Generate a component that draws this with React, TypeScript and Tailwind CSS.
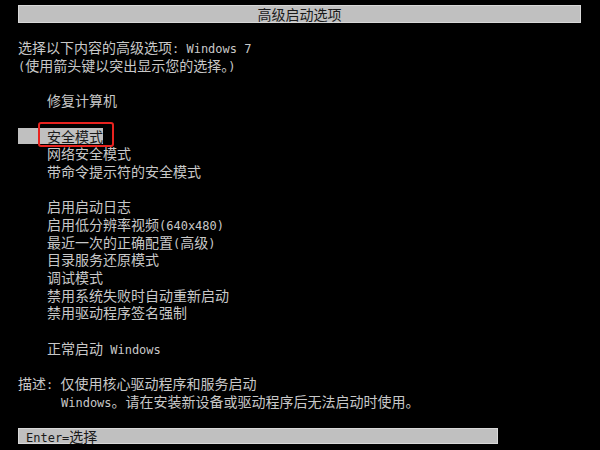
import React from "react";

const CJK = { fontFamily: '"Noto Sans CJK SC", "Noto Sans", sans-serif' };

function L({ children }: { children: React.ReactNode }) {
  return (
    <span className="text-[12px] [font-family:'DejaVu_Sans_Mono','Liberation_Mono',monospace] whitespace-pre">
      {children}
    </span>
  );
}

function Row({ children, indent = 0 }: { children?: React.ReactNode; indent?: number }) {
  return (
    <div
      className="h-[17.7px] leading-[17.7px] whitespace-pre"
      style={indent ? { paddingLeft: indent } : undefined}
    >
      {children}
    </div>
  );
}

export default function App() {
  return (
    <div
      className="w-[600px] h-[450px] bg-black overflow-hidden pt-[5px] pl-[18px] text-[14px] text-[#c8c8c8]"
      style={CJK}
    >
      <div className="w-[563px] h-[18px] bg-[#c0c0c0] border border-[#d8d8d8] text-center text-[#1a1a1a] leading-[16px]">
        高级启动选项
      </div>
      <div className="mt-[16px] flex flex-col">
        <Row>
          选择以下内容的高级选项<L>: Windows 7</L>
        </Row>
        <Row>
          <L>(</L>使用箭头键以突出显示您的选择。<L>)</L>
        </Row>
        <Row />
        <Row indent={29}>修复计算机</Row>
        <Row />
        <div className="h-[17.7px] flex items-center">
          <div className="relative h-[16px] w-[85px] bg-[#c0c0c0] pl-[29px] text-[#1a1a1a] leading-[16px] whitespace-pre">
            安全模式
            <div className="absolute left-[20px] top-[-6px] w-[76px] h-[25px] border-2 border-[#e8231f] rounded-[3px]" />
          </div>
        </div>
        <Row indent={29}>网络安全模式</Row>
        <Row indent={29}>带命令提示符的安全模式</Row>
        <Row />
        <Row indent={29}>启用启动日志</Row>
        <Row indent={29}>
          启用低分辨率视频<L>(640x480)</L>
        </Row>
        <Row indent={29}>
          最近一次的正确配置<L>(</L>高级<L>)</L>
        </Row>
        <Row indent={29}>目录服务还原模式</Row>
        <Row indent={29}>调试模式</Row>
        <Row indent={29}>禁用系统失败时自动重新启动</Row>
        <Row indent={29}>禁用驱动程序签名强制</Row>
        <Row />
        <Row indent={29}>
          正常启动<L> Windows</L>
        </Row>
        <Row />
        <Row>
          描述<L>: </L>仅使用核心驱动程序和服务启动
        </Row>
        <Row indent={43}>
          <L>Windows</L>。请在安装新设备或驱动程序后无法启动时使用。
        </Row>
        <Row />
        <div className="w-[480px] h-[16px] bg-[#c0c0c0] border border-[#d8d8d8] pl-[7px] text-[#1a1a1a] leading-[14px] whitespace-pre">
          <L>Enter=</L>选择
        </div>
      </div>
    </div>
  );
}
